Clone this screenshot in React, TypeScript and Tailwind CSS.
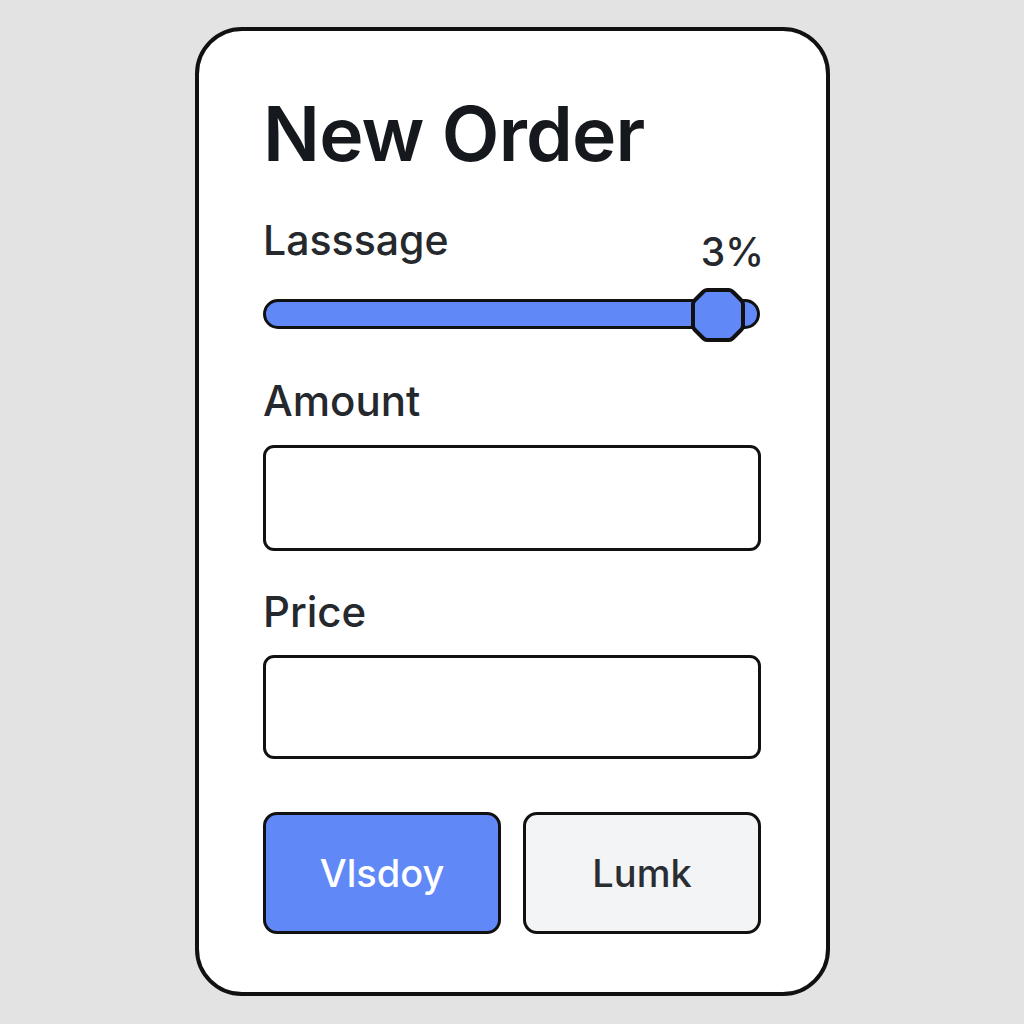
import React from "react";

function Thumb() {
  return (
    <svg width="56" height="56" viewBox="0 0 56 56" className="absolute left-[427px] top-[-1px]">
      <path
        d="M17 3 H39 Q41 3 43 5 L51 13 Q53 15 53 17 V39 Q53 41 51 43 L43 51 Q41 53 39 53 H17 Q15 53 13 51 L5 43 Q3 41 3 39 V17 Q3 15 5 13 L13 5 Q15 3 17 3 Z"
        fill="#6089f7"
        stroke="#111"
        strokeWidth="4"
        strokeLinejoin="round"
      />
    </svg>
  );
}

export default function App() {
  return (
    <div
      className="w-[1024px] h-[1024px] bg-[#e3e3e3] pt-[27px] pl-[195px]"
      style={{ fontFamily: "Inter, 'Noto Sans', sans-serif" }}
    >
      <div className="w-[635px] h-[969px] bg-white border-[4px] border-[#111] rounded-[47px] pl-[64px] pt-[66px] flex flex-col">
        <div className="w-[498px]">
          <h1 className="text-[75px] leading-[74px] font-[560] text-[#15181c] tracking-[-0.8px]">New Order</h1>

          <div className="mt-[49px] flex justify-between">
            <span className="text-[41px] leading-[40px] font-medium text-[#25282c]">Lasssage</span>
            <span className="text-[39px] leading-[40px] font-medium text-[#25282c] mt-[12px] mr-[-3px]">3%</span>
          </div>

          <div className="relative mt-[16px] h-[54px]">
            <div className="absolute left-0 top-[11px] w-[497px] h-[30px] rounded-full bg-[#6089f7] border-[3px] border-[#111]" />
            <Thumb />
          </div>

          <div className="mt-[39px] text-[42px] leading-[40px] font-medium text-[#25282c]">Amount</div>
          <div className="mt-[24px] h-[106px] rounded-[11px] border-[3px] border-[#111] bg-white" />

          <div className="mt-[41px] text-[42px] leading-[40px] font-medium text-[#25282c]">Price</div>
          <div className="mt-[23px] h-[104px] rounded-[11px] border-[3px] border-[#111] bg-white" />

          <div className="mt-[53px] flex gap-[22px]">
            <button className="w-[238px] h-[122px] rounded-[14px] border-[3px] border-[#111] bg-[#6089f7] text-white text-[38px] font-medium">
              Vlsdoy
            </button>
            <button className="w-[238px] h-[122px] rounded-[14px] border-[3px] border-[#111] bg-[#f3f4f6] text-[#2a2d31] text-[38px] font-medium">
              Lumk
            </button>
          </div>
        </div>
      </div>
    </div>
  );
}
